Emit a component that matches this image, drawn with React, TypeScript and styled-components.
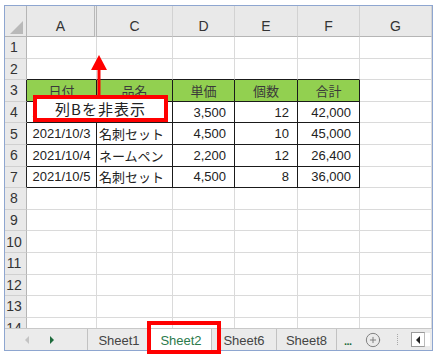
import React from 'react';
import styled, { createGlobalStyle } from 'styled-components';
import { CirclePlus } from 'lucide-react';

type Align = 'left' | 'center' | 'right';

interface CellData {
  text: string;
  align: Align;
}

const COLUMNS = ['A', 'C', 'D', 'E', 'F', 'G'];
const ROW_COUNT = 14;

const TABLE: Record<number, CellData[]> = {
  3: [
    { text: '日付', align: 'center' },
    { text: '品名', align: 'center' },
    { text: '単価', align: 'center' },
    { text: '個数', align: 'center' },
    { text: '合計', align: 'center' },
  ],
  4: [
    { text: '2021/10/2', align: 'center' },
    { text: '', align: 'left' },
    { text: '3,500', align: 'right' },
    { text: '12', align: 'right' },
    { text: '42,000', align: 'right' },
  ],
  5: [
    { text: '2021/10/3', align: 'center' },
    { text: '名刺セット', align: 'left' },
    { text: '4,500', align: 'right' },
    { text: '10', align: 'right' },
    { text: '45,000', align: 'right' },
  ],
  6: [
    { text: '2021/10/4', align: 'center' },
    { text: 'ネームペン', align: 'left' },
    { text: '2,200', align: 'right' },
    { text: '12', align: 'right' },
    { text: '26,400', align: 'right' },
  ],
  7: [
    { text: '2021/10/5', align: 'center' },
    { text: '名刺セット', align: 'left' },
    { text: '4,500', align: 'right' },
    { text: '8', align: 'right' },
    { text: '36,000', align: 'right' },
  ],
};

const SHEETS = [
  { name: 'Sheet1', width: 63 },
  { name: 'Sheet2', width: 61, active: true },
  { name: 'Sheet6', width: 65 },
  { name: 'Sheet8', width: 60 },
];

function App(): JSX.Element {
  const rows = Array.from({ length: ROW_COUNT }, (_, i) => i + 1);

  return (
    <Page>
      <GlobalStyle />
      <Frame>
        <Sheet>
          <Corner />
          {COLUMNS.map((col) => (
            <ColHeader key={col} $hidden={col === 'A'}>
              {col}
            </ColHeader>
          ))}
          {rows.map((row) => {
            const inTable = row >= 3 && row <= 7;
            const data = TABLE[row];
            return (
              <React.Fragment key={row}>
                <RowHeader $dark={inTable}>{row}</RowHeader>
                {COLUMNS.map((col, ci) => {
                  const cell = data && data[ci];
                  const boxed = inTable && ci < 5;
                  return (
                    <Cell
                      key={col}
                      $align={cell ? cell.align : 'left'}
                      $boxed={boxed}
                      $head={row === 3 && ci < 5}
                      $topEdge={row === 2 && ci < 5}
                    >
                      {cell ? cell.text : ''}
                    </Cell>
                  );
                })}
              </React.Fragment>
            );
          })}
        </Sheet>
        <TabBar>
          <NavArea>
            <NavArrow $dir="left" $color="#c4c4c4" />
            <NavArrow $dir="right" $color="#1e6b3c" />
          </NavArea>
          {SHEETS.map((s) => (
            <Tab key={s.name} $active={!!s.active} $width={s.width}>
              {s.name}
            </Tab>
          ))}
          <Ellipsis>...</Ellipsis>
          <AddButton>
            <CirclePlus size={16} strokeWidth={1.4} color="#7a7a7a" />
          </AddButton>
          <DotSep />
          <ScrollBox>
            <NavArrow $dir="left" $color="#222" />
          </ScrollBox>
        </TabBar>
      </Frame>

      <Arrow width="16" height="42" viewBox="0 0 16 42">
        <polygon points="8,0 0,15 16,15" fill="#ff0000" />
        <rect x="6.5" y="12" width="3" height="30" fill="#ff0000" />
      </Arrow>
      <Callout>列Bを非表示</Callout>
      <TabHighlight />
    </Page>
  );
}

export default App;

const GlobalStyle = createGlobalStyle`
  html, body {
    margin: 0;
    padding: 0;
    background: #ffffff;
  }
  body {
    font-family: 'Liberation Sans', 'Noto Sans CJK JP', sans-serif;
  }
`;

const Page = styled.div`
  position: relative;
  width: 440px;
  height: 358px;
  overflow: hidden;
`;

const Frame = styled.div`
  box-sizing: border-box;
  margin: 5px 0 0 4px;
  width: 429px;
  border: 1px solid #8ea6d0;
  display: flex;
  flex-direction: column;
`;

const Sheet = styled.div`
  display: grid;
  grid-template-columns: 22px 70px 76px 62px 63px 62px 72px;
  grid-template-rows: 31px repeat(14, 21.6px);
  height: 322px;
  overflow: hidden;
  font-size: 13px;
  color: #222;
`;

const Corner = styled.div`
  position: relative;
  box-sizing: border-box;
  background: #e9e9e9;
  border-right: 1px solid #b5b5b5;
  border-bottom: 1px solid #b5b5b5;

  &::after {
    content: '';
    position: absolute;
    right: 3px;
    bottom: 2px;
    width: 13px;
    height: 13px;
    background: #b9b9b9;
    clip-path: polygon(100% 0, 100% 100%, 0 100%);
  }
`;

const ColHeader = styled.div<{ $hidden: boolean }>`
  box-sizing: border-box;
  display: flex;
  align-items: center;
  justify-content: center;
  padding-top: 9px;
  background: #e9e9e9;
  border-bottom: 1px solid #b5b5b5;
  border-right: ${(p) => (p.$hidden ? '3px double #b8b8b8' : '1px solid #d2d2d2')};
  font-size: 14px;
  color: #333;
`;

const RowHeader = styled.div<{ $dark: boolean }>`
  box-sizing: border-box;
  display: flex;
  align-items: center;
  justify-content: center;
  padding-right: 3px;
  background: #e9e9e9;
  border-bottom: 1px solid #d0d0d0;
  border-right: 1px solid ${(p) => (p.$dark ? '#222' : '#b5b5b5')};
  font-size: 14px;
  color: #333;
`;

const Cell = styled.div<{ $align: Align; $boxed: boolean; $head: boolean; $topEdge: boolean }>`
  box-sizing: border-box;
  display: flex;
  align-items: center;
  justify-content: ${(p) =>
    p.$align === 'center' ? 'center' : p.$align === 'right' ? 'flex-end' : 'flex-start'};
  padding: 0 ${(p) => (p.$align === 'right' ? '8px' : '2px')} 0 2px;
  white-space: nowrap;
  overflow: hidden;
  background: ${(p) => (p.$head ? '#92d050' : '#ffffff')};
  color: ${(p) => (p.$head ? '#3a3a3a' : '#222')};
  border-right: 1px solid ${(p) => (p.$boxed ? '#1a1a1a' : '#dadada')};
  border-bottom: 1px solid ${(p) => (p.$boxed || p.$topEdge ? '#1a1a1a' : '#dadada')};
`;

const TabBar = styled.div`
  box-sizing: border-box;
  display: flex;
  align-items: center;
  height: 22px;
  background: #ebebeb;
  border-top: 1px solid #c8c8c8;
  font-size: 13px;
  color: #444;
`;

const NavArea = styled.div`
  display: flex;
  align-items: center;
  gap: 21px;
  width: 83px;
  height: 100%;
  padding-left: 20px;
  box-sizing: border-box;
  border-right: 1px solid #c2c2c2;
`;

const NavArrow = styled.span<{ $dir: 'left' | 'right'; $color: string }>`
  display: block;
  width: 0;
  height: 0;
  border-top: 4px solid transparent;
  border-bottom: 4px solid transparent;
  ${(p) =>
    p.$dir === 'left'
      ? `border-right: 4px solid ${p.$color};`
      : `border-left: 4px solid ${p.$color};`}
`;

const Tab = styled.div<{ $active: boolean; $width: number }>`
  box-sizing: border-box;
  display: flex;
  align-items: center;
  justify-content: center;
  width: ${(p) => p.$width}px;
  height: 100%;
  background: ${(p) => (p.$active ? '#ffffff' : 'transparent')};
  color: ${(p) => (p.$active ? '#2b7a4b' : '#444')};
  border-right: 1px solid #c2c2c2;
  padding-top: 1px;
`;

const Ellipsis = styled.span`
  margin-left: 7px;
  padding-top: 3px;
  color: #1e6b3c;
  font-weight: bold;
  font-size: 11px;
  letter-spacing: -0.5px;
  line-height: 1;
`;

const AddButton = styled.span`
  display: flex;
  margin-left: 13px;
`;

const DotSep = styled.span`
  width: 0;
  height: 11px;
  margin-left: 16px;
  border-left: 1px dotted #a8a8a8;
`;

const ScrollBox = styled.div`
  box-sizing: border-box;
  display: flex;
  align-items: center;
  justify-content: center;
  width: 14px;
  height: 15px;
  margin-left: 13px;
  background: #ffffff;
  border: 1px solid #9a9a9a;
  border-right-color: #bbbbbb;
  box-shadow: 6px 0 0 -1px #ffffff;
`;

const Arrow = styled.svg`
  position: absolute;
  left: 91px;
  top: 55px;
`;

const Callout = styled.div`
  position: absolute;
  left: 33px;
  top: 95px;
  box-sizing: border-box;
  width: 135px;
  height: 27px;
  display: flex;
  align-items: center;
  justify-content: center;
  background: #ffffff;
  border: 4px solid #ff0000;
  font-family: 'Noto Sans CJK JP', sans-serif;
  font-size: 15px;
  letter-spacing: 1px;
  color: #222;
`;

const TabHighlight = styled.div`
  position: absolute;
  left: 147px;
  top: 321px;
  box-sizing: border-box;
  width: 74px;
  height: 33px;
  border: 4px solid #ff0000;
`;
